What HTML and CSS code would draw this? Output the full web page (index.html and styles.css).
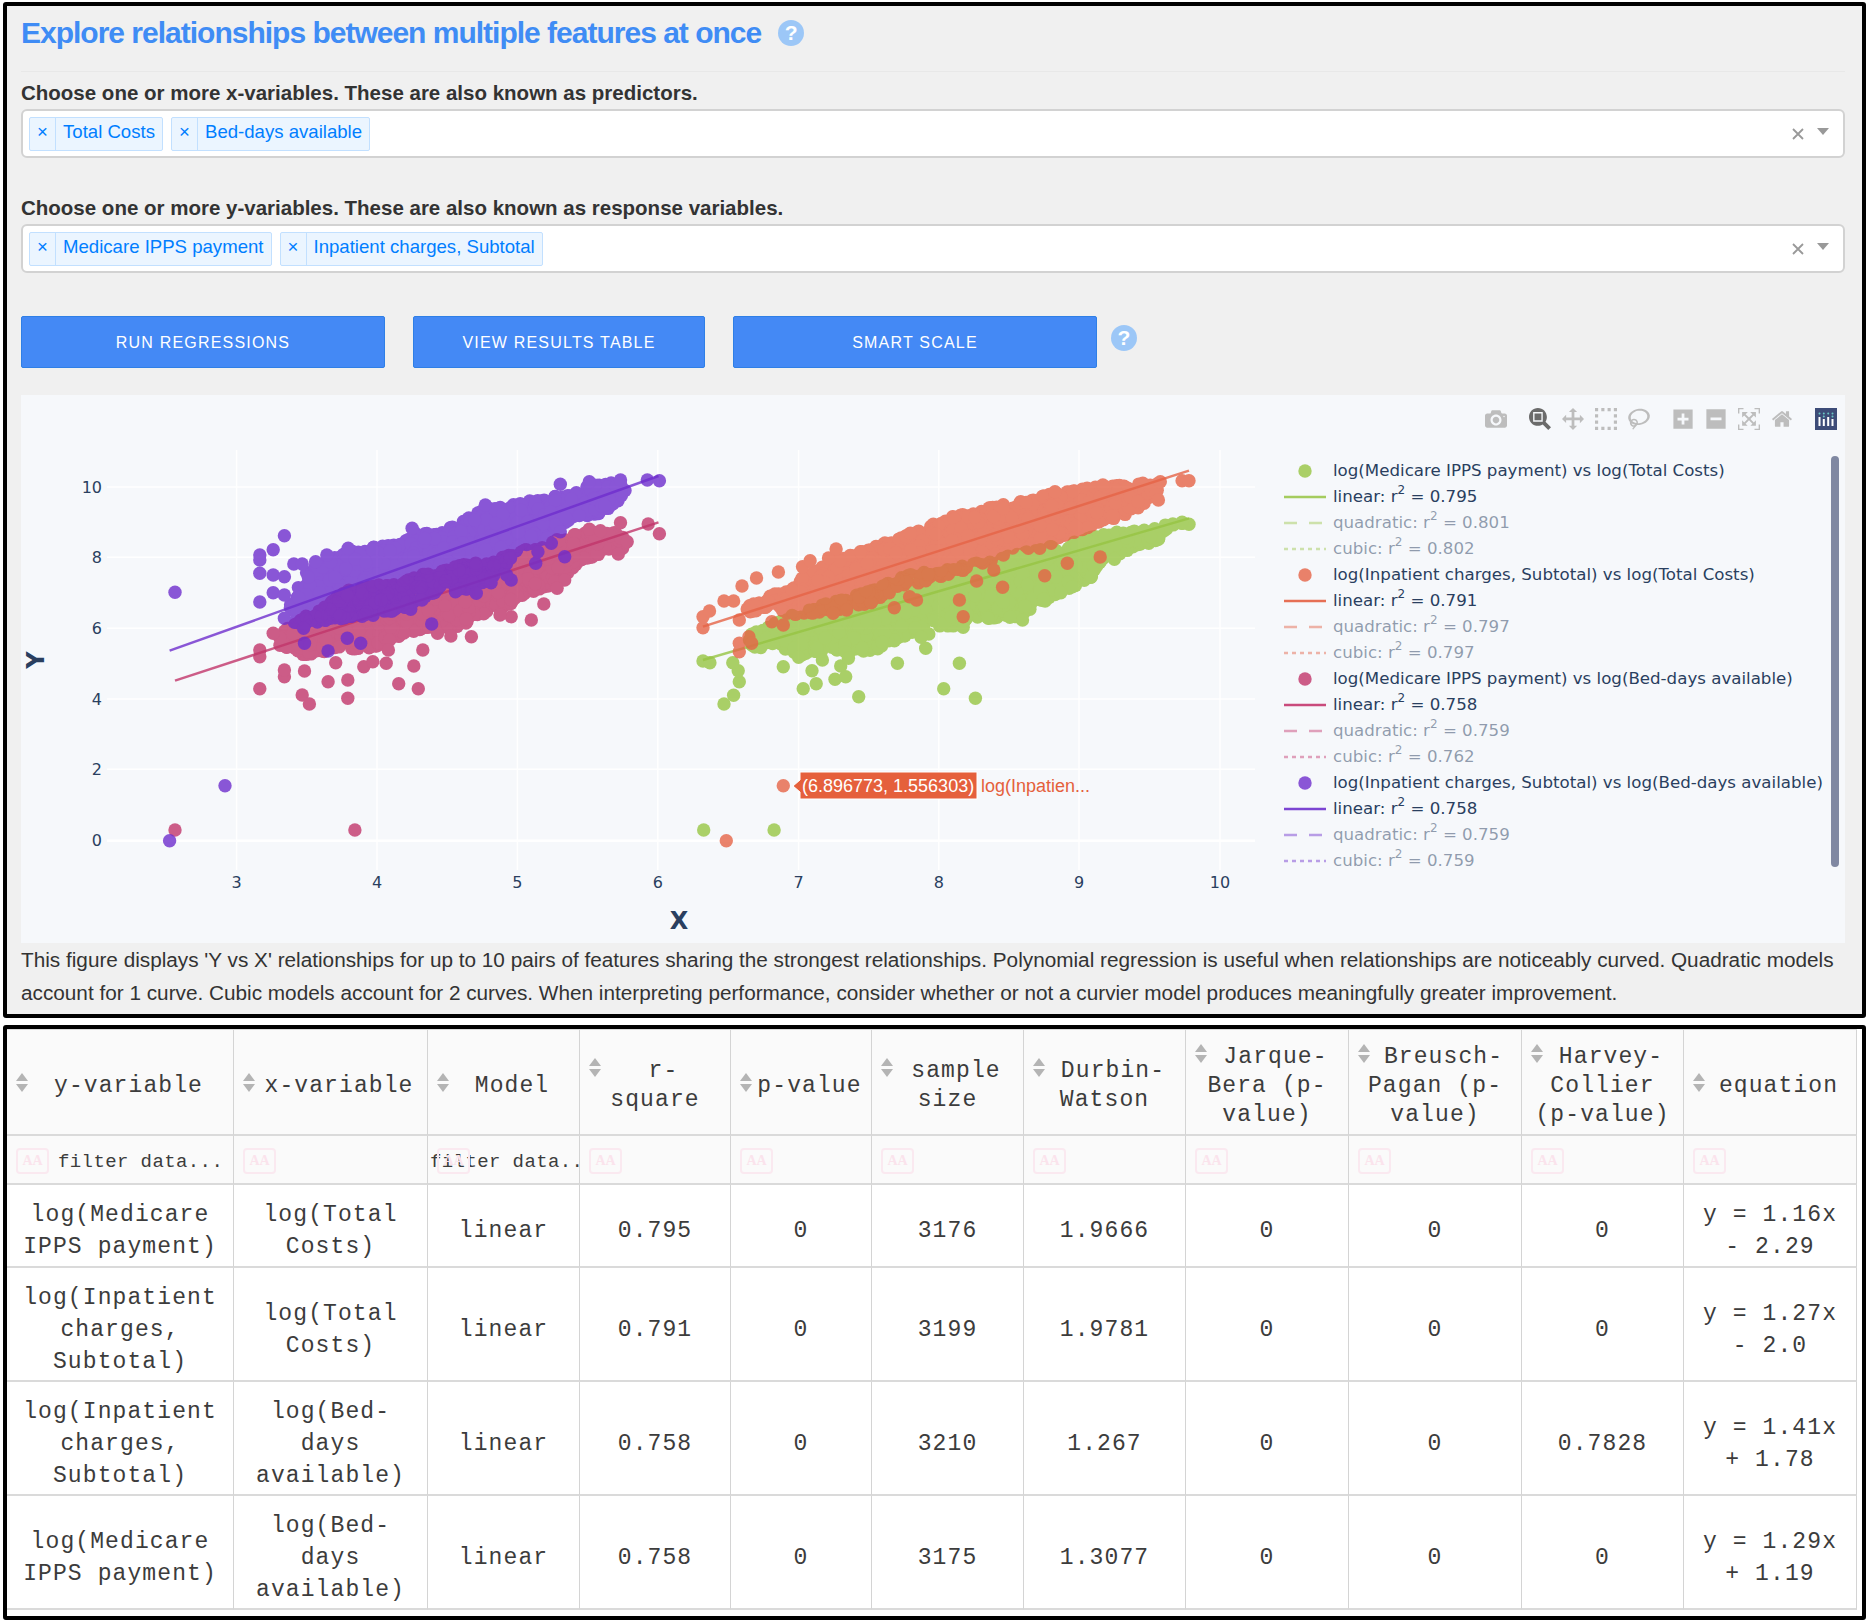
FILE: index.html
```html
<!DOCTYPE html>
<html lang="en">
<head>
    <meta charset="UTF-8">
    <title>Explore relationships</title>
    <link rel="stylesheet" href="styles.css">
</head>
<body>
<section class="panel panel-top">
    <div class="title-row">
        <h1>Explore relationships between multiple features at once</h1>
        <span class="help">?</span>
    </div>

    <label class="field-label">Choose one or more x-variables. These are also known as predictors.</label>
    <div class="select">
        <span class="chip"><span class="chip-x">×</span><span class="chip-text">Total Costs</span></span>
        <span class="chip"><span class="chip-x">×</span><span class="chip-text">Bed-days available</span></span>
        <svg class="select-clear" viewBox="0 0 12 12"><path d="M1 1l10 10M11 1L1 11"/></svg>
        <span class="select-arrow"></span>
    </div>

    <label class="field-label field-label-second">Choose one or more y-variables. These are also known as response variables.</label>
    <div class="select">
        <span class="chip"><span class="chip-x">×</span><span class="chip-text">Medicare IPPS payment</span></span>
        <span class="chip"><span class="chip-x">×</span><span class="chip-text">Inpatient charges, Subtotal</span></span>
        <svg class="select-clear" viewBox="0 0 12 12"><path d="M1 1l10 10M11 1L1 11"/></svg>
        <span class="select-arrow"></span>
    </div>

    <div class="button-row">
        <button class="btn btn-run">Run regressions</button>
        <button class="btn btn-view">View results table</button>
        <button class="btn btn-run">Smart scale</button>
        <span class="help help-buttons">?</span>
    </div>

    <div class="plot">
        <div class="modebar">
            <svg class="mb-icon" viewBox="0 0 1000 1000"><path transform="matrix(1 0 0 -1 0 850)" d="m500 450c-83 0-150-67-150-150 0-83 67-150 150-150 83 0 150 67 150 150 0 83-67 150-150 150z m400 150h-120c-16 0-34 13-39 29l-31 93c-6 15-23 28-40 28h-340c-16 0-34-13-39-28l-31-94c-6-15-23-28-40-28h-120c-55 0-100-45-100-100v-450c0-55 45-100 100-100h800c55 0 100 45 100 100v450c0 55-45 100-100 100z m-400-550c-138 0-250 112-250 250 0 138 112 250 250 250 138 0 250-112 250-250 0-138-112-250-250-250z m365 380c-19 0-35 16-35 35 0 19 16 35 35 35 19 0 35-16 35-35 0-19-16-35-35-35z"/></svg>
            <svg class="mb-icon mb-active mb-group" viewBox="0 0 1000 1000"><path transform="matrix(1 0 0 -1 0 850)" d="m1000-25l-250 251c40 63 63 138 63 218 0 224-182 406-407 406-224 0-406-182-406-406s183-406 407-406c80 0 155 22 218 62l250-250 125 125z m-812 250l0 438 437 0 0-438-437 0z m62 375l313 0 0-312-313 0 0 312z"/></svg>
            <svg class="mb-icon" viewBox="0 0 1000 1000"><path transform="matrix(1 0 0 -1 0 850)" d="m1000 350l-187 188 0-125-250 0 0 250 125 0-188 187-187-187 125 0 0-250-250 0 0 125-188-188 186-187 0 125 252 0 0-250-125 0 187-188 188 188-125 0 0 250 250 0 0-126 187 188z"/></svg>
            <svg class="mb-icon" viewBox="0 0 1000 1000"><path transform="matrix(1 0 0 -1 0 850)" d="m0 850l0-143 143 0 0 143-143 0z m286 0l0-143 143 0 0 143-143 0z m285 0l0-143 143 0 0 143-143 0z m286 0l0-143 143 0 0 143-143 0z m-857-286l0-143 143 0 0 143-143 0z m857 0l0-143 143 0 0 143-143 0z m-857-285l0-143 143 0 0 143-143 0z m857 0l0-143 143 0 0 143-143 0z m-857-286l0-143 143 0 0 143-143 0z m286 0l0-143 143 0 0 143-143 0z m285 0l0-143 143 0 0 143-143 0z m286 0l0-143 143 0 0 143-143 0z"/></svg>
            <svg class="mb-icon" viewBox="0 0 1031 1000"><path transform="matrix(1 0 0 -1 0 850)" d="m1018 538c-36 207-290 336-568 286-277-48-473-256-436-463 10-57 36-108 76-151-13-66 11-137 68-183 34-28 75-41 114-42l-55-70 0 0c-2-1-3-2-4-3-10-14-8-34 5-45 14-11 34-8 45 4 1 1 2 3 2 5l0 0 113 140c16 11 31 24 45 40 4 3 6 7 8 11 48-3 100 0 151 9 278 48 473 255 436 462z m-624-379c-80 14-149 48-197 96 42 42 109 47 156 9 33-26 47-66 41-105z m-187-74c-19 16-33 37-39 60 50-32 109-55 174-68-42-25-95-24-135 8z m360 75c-34-7-69-9-102-8 8 62-16 128-68 170-73 59-175 54-244-5-9 20-16 40-20 61-28 159 121 317 333 354s407-60 434-217c28-159-121-318-333-355z"/></svg>
            <svg class="mb-icon mb-group" viewBox="0 0 875 1000"><path transform="matrix(1 0 0 -1 0 850)" d="m1 787l0-875 875 0 0 875-875 0z m687-500l-187 0 0-187-125 0 0 187-188 0 0 125 188 0 0 187 125 0 0-187 187 0 0-125z"/></svg>
            <svg class="mb-icon" viewBox="0 0 875 1000"><path transform="matrix(1 0 0 -1 0 850)" d="m0 788l0-876 875 0 0 876-875 0z m688-500l-500 0 0 125 500 0 0-125z"/></svg>
            <svg class="mb-icon" viewBox="0 0 1000 1000"><path transform="matrix(1 0 0 -1 0 850)" d="m250 850l-187 0-63 0 0-62 0-188 63 0 0 188 187 0 0 62z m688 0l-188 0 0-62 188 0 0-188 62 0 0 188 0 62-62 0z m-875-938l0 188-63 0 0-188 0-62 63 0 187 0 0 62-187 0z m875 188l0-188-188 0 0-62 188 0 62 0 0 62 0 188-62 0z m-125 188l-1 0-93-94-156 156 156 156 92-93 2 0 0 250-250 0 0-2 93-92-156-156-156 156 94 92 0 2-250 0 0-250 0 0 93 93 157-156-157-156-93 94 0 0 0-250 250 0 0 0-94 93 156 157 156-157-93-93 0 0 250 0 0 250z"/></svg>
            <svg class="mb-icon" viewBox="0 0 929 1000"><path transform="matrix(1 0 0 -1 0 850)" d="m786 296v-267q0-15-11-26t-25-10h-214v214h-143v-214h-214q-15 0-25 10t-11 26v267q0 1 0 2t0 2l321 264 321-264q1-1 1-4z m124 39l-34-41q-5-5-12-6h-2q-7 0-12 3l-386 322-386-322q-7-4-13-4-7 2-12 7l-35 41q-4 5-3 13t6 12l401 334q18 15 42 15t43-15l136-114v109q0 8 5 13t13 5h107q8 0 13-5t5-13v-227l122-102q5-5 6-12t-4-13z"/></svg>
            <svg class="mb-logo mb-group" viewBox="0 0 22 22">
                <rect width="22" height="22" fill="#3d4c78"/>
                <path d="M4.500 9v9M8.800 11v7M13.200 9v9M17.500 11v7" stroke="#fff" stroke-width="2"/>
                <path d="M4.500 5.500h.01M8.800 5.500h.01M13.200 5.500h.01M17.500 5.500h.01M8.800 8.500h.01M17.500 8.500h.01" stroke="#6bc6c4" stroke-width="2" stroke-linecap="round"/>
            </svg>
        </div>

        <svg id="chart" class="chart" viewBox="21 395 1263 548">
            <g id="grid"></g>
            <g id="traces"></g>
            <g class="tick tick-y">
                <text x="102" y="493">10</text>
                <text x="102" y="563">8</text>
                <text x="102" y="634">6</text>
                <text x="102" y="705">4</text>
                <text x="102" y="775">2</text>
                <text x="102" y="846">0</text>
            </g>
            <g class="tick tick-x">
                <text x="236.600" y="888">3</text>
                <text x="377" y="888">4</text>
                <text x="517.400" y="888">5</text>
                <text x="657.800" y="888">6</text>
                <text x="798.600" y="888">7</text>
                <text x="938.800" y="888">8</text>
                <text x="1079" y="888">9</text>
                <text x="1220" y="888">10</text>
            </g>
            <text class="axis-title" x="679" y="929">X</text>
            <text class="axis-title" transform="translate(44 660) rotate(-90)">Y</text>
            <path class="hover-box" d="M793 786l7-6v-8h177v27h-177v-7z"/>
            <text class="hover-value" x="802" y="792">(6.896773, 1.556303)</text>
            <text class="hover-name" x="981" y="792">log(Inpatien...</text>
        </svg>

        <div class="legend">
            <div class="legend-row c1"><svg class="sym"><circle cx="21" cy="13" r="6.700"/></svg>log(Medicare IPPS payment) vs log(Total Costs)</div>
            <div class="legend-row c1"><svg class="sym"><line x1="0" x2="42" y1="13" y2="13"/></svg>linear: r<sup>2</sup> = 0.795</div>
            <div class="legend-row c1 off"><svg class="sym"><line class="dash" x1="0" x2="42" y1="13" y2="13"/></svg>quadratic: r<sup>2</sup> = 0.801</div>
            <div class="legend-row c1 off"><svg class="sym"><line class="dot" x1="0" x2="42" y1="13" y2="13"/></svg>cubic: r<sup>2</sup> = 0.802</div>
            <div class="legend-row c2"><svg class="sym"><circle cx="21" cy="13" r="6.700"/></svg>log(Inpatient charges, Subtotal) vs log(Total Costs)</div>
            <div class="legend-row c2"><svg class="sym"><line x1="0" x2="42" y1="13" y2="13"/></svg>linear: r<sup>2</sup> = 0.791</div>
            <div class="legend-row c2 off"><svg class="sym"><line class="dash" x1="0" x2="42" y1="13" y2="13"/></svg>quadratic: r<sup>2</sup> = 0.797</div>
            <div class="legend-row c2 off"><svg class="sym"><line class="dot" x1="0" x2="42" y1="13" y2="13"/></svg>cubic: r<sup>2</sup> = 0.797</div>
            <div class="legend-row c3"><svg class="sym"><circle cx="21" cy="13" r="6.700"/></svg>log(Medicare IPPS payment) vs log(Bed-days available)</div>
            <div class="legend-row c3"><svg class="sym"><line x1="0" x2="42" y1="13" y2="13"/></svg>linear: r<sup>2</sup> = 0.758</div>
            <div class="legend-row c3 off"><svg class="sym"><line class="dash" x1="0" x2="42" y1="13" y2="13"/></svg>quadratic: r<sup>2</sup> = 0.759</div>
            <div class="legend-row c3 off"><svg class="sym"><line class="dot" x1="0" x2="42" y1="13" y2="13"/></svg>cubic: r<sup>2</sup> = 0.762</div>
            <div class="legend-row c4"><svg class="sym"><circle cx="21" cy="13" r="6.700"/></svg>log(Inpatient charges, Subtotal) vs log(Bed-days available)</div>
            <div class="legend-row c4"><svg class="sym"><line x1="0" x2="42" y1="13" y2="13"/></svg>linear: r<sup>2</sup> = 0.758</div>
            <div class="legend-row c4 off"><svg class="sym"><line class="dash" x1="0" x2="42" y1="13" y2="13"/></svg>quadratic: r<sup>2</sup> = 0.759</div>
            <div class="legend-row c4 off"><svg class="sym"><line class="dot" x1="0" x2="42" y1="13" y2="13"/></svg>cubic: r<sup>2</sup> = 0.759</div>
        </div>
        <div class="legend-scroll"></div>
    </div>

    <p class="caption">This figure displays 'Y vs X' relationships for up to 10 pairs of features sharing the strongest relationships. Polynomial regression is useful when relationships are noticeably curved. Quadratic models account for 1 curve. Cubic models account for 2 curves. When interpreting performance, consider whether or not a curvier model produces meaningfully greater improvement.</p>
</section>

<section class="panel panel-table">
    <table class="results">
        <colgroup>
            <col class="w227"><col class="w194"><col class="w152"><col class="w151"><col class="w141"><col class="w152"><col class="w162"><col class="w163"><col class="w173"><col class="w162"><col class="w173">
        </colgroup>
        <thead>
            <tr class="head-row">
                <th><span class="sort"></span>y-variable</th>
                <th><span class="sort"></span>x-variable</th>
                <th><span class="sort"></span>Model</th>
                <th><span class="sort"></span>r-<br>square</th>
                <th><span class="sort"></span>p-value</th>
                <th><span class="sort"></span>sample<br>size</th>
                <th><span class="sort"></span>Durbin-<br>Watson</th>
                <th><span class="sort"></span>Jarque-<br>Bera (p-<br>value)</th>
                <th><span class="sort"></span>Breusch-<br>Pagan (p-<br>value)</th>
                <th><span class="sort"></span>Harvey-<br>Collier<br>(p-value)</th>
                <th><span class="sort"></span>equation</th>
            </tr>
            <tr class="filter-row">
                <th class="ph-wide"><span class="aa">AA</span>filter data...</th>
                <th><span class="aa">AA</span></th>
                <th class="ph-tight"><span class="aa">AA</span>filter data...</th>
                <th><span class="aa">AA</span></th>
                <th><span class="aa">AA</span></th>
                <th><span class="aa">AA</span></th>
                <th><span class="aa">AA</span></th>
                <th><span class="aa">AA</span></th>
                <th><span class="aa">AA</span></th>
                <th><span class="aa">AA</span></th>
                <th><span class="aa">AA</span></th>
            </tr>
        </thead>
        <tbody>
            <tr class="row-short">
                <td>log(Medicare IPPS payment)</td><td>log(Total Costs)</td><td>linear</td><td>0.795</td><td>0</td><td>3176</td><td>1.9666</td><td>0</td><td>0</td><td>0</td><td>y = 1.16x - 2.29</td>
            </tr>
            <tr class="row-second">
                <td>log(Inpatient charges, Subtotal)</td><td>log(Total Costs)</td><td>linear</td><td>0.791</td><td>0</td><td>3199</td><td>1.9781</td><td>0</td><td>0</td><td>0</td><td>y = 1.27x - 2.0</td>
            </tr>
            <tr class="row-tall">
                <td>log(Inpatient charges, Subtotal)</td><td>log(Bed-days available)</td><td>linear</td><td>0.758</td><td>0</td><td>3210</td><td>1.267</td><td>0</td><td>0</td><td>0.7828</td><td>y = 1.41x + 1.78</td>
            </tr>
            <tr class="row-tall">
                <td>log(Medicare IPPS payment)</td><td>log(Bed-days available)</td><td>linear</td><td>0.758</td><td>0</td><td>3175</td><td>1.3077</td><td>0</td><td>0</td><td>0</td><td>y = 1.29x + 1.19</td>
            </tr>
        </tbody>
    </table>
</section>

<script src="plot.js"></script>
</body>
</html>
```

FILE: styles.css
```css
body {
    margin: 0;
    background-color: #ffffff;
    font-family: "Liberation Sans", Arial, sans-serif;
    color: #333333;
}

.panel {
    border: 4px solid #000000;
    border-radius: 3px;
    margin: 0 3px;
}

.panel-top {
    height: 1008px;
    margin-top: 2px;
    padding: 0 17px 0 14px;
    background-color: #f0f0f0;
}

.panel-table {
    height: 587px;
    margin-top: 7px;
    background-color: #ffffff;
    border-bottom-width: 4px;
}

.title-row {
    display: flex;
    align-items: center;
    height: 53px;
    padding-bottom: 12px;
    border-bottom: 1px solid #e8e8e8;
    box-sizing: content-box;
}

h1 {
    margin: 0;
    font-size: 30px;
    font-weight: bold;
    letter-spacing: -1px;
    color: #3f8cf5;
}

.help {
    display: flex;
    align-items: center;
    justify-content: center;
    width: 26px;
    height: 26px;
    margin-left: 17px;
    border-radius: 50%;
    background-color: #9cc7f7;
    color: #ffffff;
    font-size: 21px;
    font-weight: bold;
}

.field-label {
    display: block;
    margin-top: 9px;
    padding-bottom: 1px;
    font-size: 20.500px;
    line-height: 24px;
    font-weight: bold;
}

.field-label-second {
    margin-top: 38px;
}

.select {
    display: flex;
    align-items: center;
    box-sizing: border-box;
    height: 49px;
    margin-top: 3px;
    padding: 0 14px 0 6px;
    background-color: #ffffff;
    border: 2px solid #d2d2d2;
    border-radius: 6px;
}

.chip {
    display: flex;
    align-items: stretch;
    height: 34px;
    box-sizing: border-box;
    margin-right: 8px;
    background-color: #ebf5ff;
    border: 1px solid #c2e0ff;
    border-radius: 2px;
    color: #007eff;
    font-size: 18.600px;
    line-height: 28px;
}

.chip-x {
    width: 25px;
    text-align: center;
    border-right: 1px solid #c2e0ff;
}

.chip-text {
    padding: 0 7px;
}

.select-clear {
    width: 12px;
    height: 12px;
    margin-left: auto;
    stroke: #999999;
    stroke-width: 1.800;
    fill: none;
}

.select-arrow {
    width: 0;
    height: 0;
    margin-left: 13px;
    margin-bottom: 4px;
    border-style: solid;
    border-width: 7px 6.500px 0;
    border-color: #999999 transparent transparent;
}

.button-row {
    display: flex;
    align-items: flex-start;
    margin-top: 43px;
}

.btn {
    height: 52px;
    margin-right: 28px;
    padding-top: 3px;
    background-color: #4489f5;
    border: 1px solid #2f7fe6;
    border-radius: 2px;
    color: #ffffff;
    font-family: "Liberation Sans", Arial, sans-serif;
    font-size: 16px;
    letter-spacing: 1.200px;
    text-transform: uppercase;
}

.btn-run {
    width: 364px;
}

.btn-view {
    width: 292px;
}

.help-buttons {
    margin: 9px 0 0 -14px;
}

.plot {
    position: relative;
    display: flex;
    width: 1824px;
    height: 548px;
    margin-top: 27px;
    background-color: #f6f8fb;
}

.modebar {
    position: absolute;
    top: 13px;
    right: 8px;
    display: flex;
    gap: 11px;
}

.mb-icon {
    width: 22px;
    height: 22px;
    fill: #bdbdbd;
}

.mb-active {
    fill: #6b6b6b;
}

.mb-group {
    margin-left: 11px;
}

.mb-logo {
    width: 22px;
    height: 22px;
}

.chart {
    flex: none;
    width: 1263px;
    height: 548px;
}

.tick text {
    font-family: "DejaVu Sans", sans-serif;
    font-size: 16px;
    fill: #2a3f5f;
}

.tick-y text {
    text-anchor: end;
}

.tick-x text {
    text-anchor: middle;
}

.axis-title {
    font-family: "DejaVu Sans", sans-serif;
    font-size: 24px;
    font-weight: bold;
    fill: #2a3f5f;
    text-anchor: middle;
}

.hover-box {
    fill: #e5603c;
    stroke: #ffffff;
    stroke-width: 1;
}

.hover-value,
.hover-name {
    font-family: "Liberation Sans", Arial, sans-serif;
    font-size: 18px;
}

.hover-value {
    fill: #ffffff;
}

.hover-name {
    fill: #e5603c;
}

.legend {
    padding-top: 63px;
    color: #2a3f5f;
    font-family: "DejaVu Sans", sans-serif;
    font-size: 16.650px;
}

.legend-row {
    display: flex;
    align-items: center;
    height: 26px;
    line-height: 26px;
    white-space: pre;
}

.legend-row sup {
    position: relative;
    top: -7px;
    font-size: 12px;
    line-height: 0;
}

.sym {
    flex: none;
    width: 42px;
    height: 26px;
    margin-right: 7px;
}

.off {
    color: rgba(42, 63, 95, 0.5);
}

.off .sym {
    opacity: 0.5;
}

.sym line {
    stroke-width: 2.500;
}

.sym .dash {
    stroke-dasharray: 13 12;
}

.sym .dot {
    stroke-dasharray: 4 4;
}

.c1 .sym circle { fill: #aacf67; }
.c2 .sym circle { fill: #e9816a; }
.c3 .sym circle { fill: #cc5c87; }
.c4 .sym circle { fill: #8a56d6; }
.c1 .sym line { stroke: #a5cc5e; }
.c2 .sym line { stroke: #e66f55; }
.c3 .sym line { stroke: #c94b7c; }
.c4 .sym line { stroke: #7c45d2; }

.legend-scroll {
    position: absolute;
    top: 61px;
    left: 1810px;
    width: 8px;
    height: 411px;
    border-radius: 4px;
    background-color: #8088a2;
}

.caption {
    margin: 0;
    font-size: 20.750px;
    line-height: 33px;
}

.results {
    table-layout: fixed;
    width: 1850px;
    border-collapse: separate;
    border-spacing: 0;
    border-top: 1px solid #d8d8d8;
    font-family: "Liberation Mono", "Courier New", monospace;
    color: #3c3c3c;
}

.w227 { width: 227px; }
.w194 { width: 194px; }
.w152 { width: 152px; }
.w151 { width: 151px; }
.w141 { width: 141px; }
.w162 { width: 162px; }
.w163 { width: 163px; }
.w173 { width: 173px; }

.results th,
.results td {
    border-right: 1px solid #d4d4d4;
    border-bottom: 2px solid #dadada;
    box-sizing: border-box;
    text-align: center;
    font-weight: normal;
}

.results th {
    padding: 0;
    background-color: #fafafa;
}

.head-row th {
    height: 106px;
    padding-top: 8px;
    font-size: 23px;
    letter-spacing: 1.100px;
    line-height: 29px;
}

.sort {
    float: left;
    position: relative;
    width: 13px;
    height: 19px;
    margin: 1px -5px 0 9px;
}

.sort::before,
.sort::after {
    content: "";
    position: absolute;
    left: 0;
    border-style: solid;
    border-color: transparent;
}

.sort::before {
    top: 0;
    border-width: 0 6.500px 8.500px;
    border-bottom-color: #b4b4b4;
}

.sort::after {
    bottom: 0;
    border-width: 8.500px 6.500px 0;
    border-top-color: #b4b4b4;
}

.filter-row th {
    position: relative;
    height: 49px;
    padding-top: 4px;
    overflow: hidden;
    white-space: nowrap;
    font-size: 19px;
    letter-spacing: 0.400px;
    color: #3c3c3c;
}

.filter-row .ph-wide {
    padding-left: 51px;
    text-align: left;
}

.filter-row .ph-tight {
    padding-left: 2px;
    text-align: left;
}

.aa {
    position: absolute;
    top: 12px;
    left: 9px;
    box-sizing: border-box;
    width: 33px;
    height: 26px;
    border: 2px solid #fae9f0;
    border-radius: 4px;
    color: #fae3ec;
    font-family: "Liberation Serif", serif;
    font-size: 14px;
    font-weight: bold;
    letter-spacing: 0;
    line-height: 21px;
    text-align: center;
}

.results td {
    padding: 11px 10px 0;
    font-size: 23px;
    letter-spacing: 1.100px;
    line-height: 32px;
    background-color: #ffffff;
}

.row-short td { height: 83px; }
.row-second td { height: 114px; }
.row-tall td { height: 114px; }
```

FILE: plot.js
```js
// scatter traces of the regression figure, drawn into the chart svg
const SVG_NS = 'http://www.w3.org/2000/svg';

function el(parent, name, attrs) {
    const node = document.createElementNS(SVG_NS, name);
    for (const key in attrs) {
        node.setAttribute(key, attrs[key]);
    }
    parent.appendChild(node);
    return node;
}

// points below were read off two crops of the figure, these bring them to page pixels
const fromLeft = ([x, y]) => [x / 2.24, 440 + y / 3];
const fromRight = ([x, y]) => [680 + x / 2.613, 440 + y / 3];

const MARKER_R = 6.7;
const CLOUD_SIZE = 1400;

// small seeded generator so the cloud stays the same between loads
let seed = 11;
function rand() {
    seed = (seed * 16807) % 2147483647;
    return seed / 2147483647;
}

const traces = [
    {
        color: '#97c543',
        map: fromRight,
        line: [[60, 660], [1330, 235]],
        blob: [[175, 575], [290, 515], [380, 480], [500, 440], [600, 390], [700, 375], [840, 340], [1000, 300], [1100, 270], [1200, 255], [1310, 235], [1345, 250], [1270, 280], [1260, 310], [1180, 340], [1130, 365], [1080, 420], [1000, 470], [960, 490], [900, 540], [810, 550], [770, 545], [740, 570], [680, 570], [620, 580], [590, 600], [540, 625], [480, 660], [400, 640], [310, 660], [240, 630], [190, 640], [165, 610]],
        dots: [[115, 792], [140, 766], [155, 725], [152, 692], [138, 668], [60, 663], [78, 668], [270, 680], [322, 746], [356, 731], [345, 692], [405, 718], [433, 710], [467, 770], [568, 670], [689, 746], [772, 775], [730, 670], [642, 625], [62, 1170], [246, 1170], [1330, 253], [1312, 247], [895, 540], [862, 532], [740, 562], [650, 582], [630, 592], [420, 678], [440, 655], [372, 660], [310, 652], [1135, 358], [1075, 410], [1025, 440], [995, 458], [950, 478], [1250, 298], [1230, 290]]
    },
    {
        color: '#e66447',
        map: fromRight,
        line: [[60, 560], [1330, 92]],
        blob: [[165, 495], [240, 450], [320, 400], [400, 350], [480, 320], [560, 285], [640, 250], [720, 215], [830, 185], [940, 155], [1000, 145], [1100, 125], [1250, 115], [1270, 130], [1260, 170], [1180, 230], [1100, 260], [1030, 290], [950, 320], [860, 340], [800, 385], [720, 410], [640, 440], [580, 450], [500, 500], [420, 520], [300, 540], [240, 520], [165, 530]],
        dots: [[60, 563], [60, 530], [77, 513], [115, 483], [140, 483], [162, 438], [200, 414], [257, 396], [320, 380], [340, 362], [388, 354], [408, 327], [270, 1037], [121, 1202], [1312, 122], [1330, 122], [1250, 180], [155, 540], [155, 610], [155, 635], [180, 590], [187, 610], [240, 545], [270, 555], [295, 515], [560, 503], [618, 480], [600, 470], [730, 480], [740, 530], [775, 423], [843, 442], [953, 407], [1012, 370], [1098, 351], [1255, 125], [1105, 135], [980, 155], [910, 325], [940, 325], [970, 310], [845, 345], [820, 390], [400, 520], [435, 510]]
    },
    {
        color: '#c2366b',
        map: fromLeft,
        line: [[392, 722], [1475, 247]],
        blob: [[610, 585], [680, 520], [790, 430], [870, 420], [950, 390], [1000, 370], [1100, 350], [1170, 320], [1250, 285], [1320, 260], [1380, 265], [1420, 300], [1400, 335], [1320, 365], [1280, 400], [1250, 440], [1170, 480], [1130, 520], [1060, 540], [1040, 570], [960, 580], [900, 600], [830, 640], [750, 640], [680, 660], [610, 620]],
        dots: [[392, 1170], [795, 1170], [582, 746], [637, 710], [637, 690], [582, 630], [582, 650], [612, 580], [677, 765], [693, 792], [735, 725], [779, 720], [779, 775], [893, 731], [937, 746], [927, 678], [865, 670], [752, 668], [682, 693], [815, 680], [835, 665], [1190, 540], [1218, 492], [1145, 530], [1120, 525], [1056, 590], [1010, 588], [980, 580], [947, 630], [870, 630], [1390, 248], [1452, 252], [1477, 281], [1385, 342], [1265, 420], [1248, 445], [1405, 305], [1320, 268], [1345, 272]]
    },
    {
        color: '#6f2ece',
        map: fromLeft,
        line: [[380, 632], [1475, 108]],
        blob: [[640, 500], [670, 400], [720, 350], [780, 320], [830, 310], [900, 300], [920, 262], [980, 270], [1040, 225], [1090, 190], [1140, 185], [1200, 165], [1280, 150], [1320, 120], [1390, 115], [1415, 145], [1400, 190], [1340, 235], [1280, 250], [1230, 310], [1170, 330], [1150, 370], [1100, 430], [1060, 460], [1010, 460], [945, 490], [920, 520], [830, 540], [790, 545], [720, 555], [680, 570], [640, 550]],
        dots: [[392, 457], [504, 1037], [380, 1202], [637, 287], [612, 329], [582, 345], [582, 360], [582, 400], [612, 405], [637, 410], [658, 372], [677, 372], [707, 365], [732, 345], [780, 325], [612, 458], [582, 486], [637, 465], [923, 265], [1087, 195], [1255, 133], [1320, 125], [1390, 120], [1450, 120], [1477, 122], [967, 552], [680, 565], [682, 610], [735, 633], [778, 595], [808, 610], [637, 535], [1265, 350], [1200, 370], [1145, 420], [1135, 405], [1225, 295], [1255, 275], [1020, 455], [1067, 460], [1100, 428], [1205, 335], [1235, 310], [920, 508], [945, 480]]
    }
];

function drawGrid() {
    const grid = document.getElementById('grid');
    const xs = [236.6, 377, 517.4, 657.8, 798.6, 938.8, 1079, 1220];
    const ys = [487, 557.3, 628.3, 699, 769.3];
    xs.forEach(x => el(grid, 'line', { x1: x, x2: x, y1: 450, y2: 870, stroke: '#ffffff', 'stroke-width': 1.5 }));
    ys.forEach(y => el(grid, 'line', { x1: 107, x2: 1255, y1: y, y2: y, stroke: '#ffffff', 'stroke-width': 1.5 }));
    el(grid, 'line', { x1: 107, x2: 1255, y1: 840.7, y2: 840.7, stroke: '#ffffff', 'stroke-width': 2.5 });
}

function circle(group, x, y, color) {
    el(group, 'circle', { cx: x.toFixed(1), cy: y.toFixed(1), r: MARKER_R, fill: color });
}

function inside(poly, x, y) {
    let hit = false;
    for (let i = 0, j = poly.length - 1; i < poly.length; j = i++) {
        const [xi, yi] = poly[i];
        const [xj, yj] = poly[j];
        if ((yi > y) !== (yj > y) && x < (xj - xi) * (y - yi) / (yj - yi) + xi) {
            hit = !hit;
        }
    }
    return hit;
}

// the outline is the outer edge of the markers, so keep centres a bit away from it
function insideEroded(poly, x, y) {
    const d = 4;
    return inside(poly, x, y) && inside(poly, x + d, y) && inside(poly, x - d, y)
        && inside(poly, x, y + d) && inside(poly, x, y - d);
}

function drawTrace(parent, trace) {
    const group = el(parent, 'g', { opacity: 0.8 });
    const outline = trace.blob.map(trace.map);
    const xs = outline.map(p => p[0]);
    const ys = outline.map(p => p[1]);
    const left = Math.min(...xs);
    const top = Math.min(...ys);
    const w = Math.max(...xs) - left;
    const h = Math.max(...ys) - top;

    let placed = 0;
    for (let tries = 0; placed < CLOUD_SIZE && tries < 60000; tries++) {
        const x = left + rand() * w;
        const y = top + rand() * h;
        if (insideEroded(outline, x, y)) {
            circle(group, x, y, trace.color);
            placed++;
        }
    }

    trace.dots.map(trace.map).forEach(([x, y]) => circle(group, x, y, trace.color));
}

function drawLine(parent, trace) {
    const [a, b] = trace.line.map(trace.map);
    el(parent, 'line', {
        x1: a[0], y1: a[1], x2: b[0], y2: b[1],
        stroke: trace.color,
        'stroke-width': 2.5,
        opacity: 0.8
    });
}

drawGrid();
const layer = document.getElementById('traces');
traces.forEach(trace => {
    drawTrace(layer, trace);
    drawLine(layer, trace);
});
```
